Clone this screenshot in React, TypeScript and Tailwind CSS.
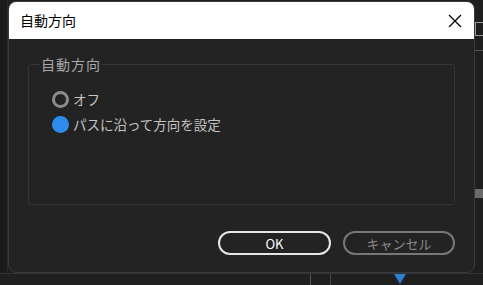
import React from 'react';

function Radio({ checked, label }: { checked: boolean; label: string }) {
  return (
    <label className="flex items-center gap-[4px] h-[25px]">
      {checked ? (
        <span className="w-[17px] h-[17px] rounded-full bg-[#2d8ceb]" />
      ) : (
        <span className="w-[17px] h-[17px] rounded-full border-[3px] border-[#8c8c8c]" />
      )}
      <span className="text-[13.5px] text-[#c4c4c4] leading-none">{label}</span>
    </label>
  );
}

export default function App() {
  return (
    <div
      className="w-[483px] h-[285px] bg-[#1e1e1e] overflow-hidden flex flex-col"
      style={{ fontFamily: '"Noto Sans CJK JP", "Noto Sans", sans-serif' }}
    >
      <div className="flex h-[273px] pt-[1px]">
        <div className="w-[8px] bg-[#1b1b1b] border-r border-[#2c2c2c]" />
        <div className="w-[467px] h-[272px] rounded-[8px] overflow-hidden border border-[#3a3a3a] bg-[#232323] flex flex-col">
          <div className="h-[37px] bg-white flex items-center justify-between pl-[11px] pr-[12px]">
            <span className="text-[14px] text-black">自動方向</span>
            <svg width="14" height="14" viewBox="0 0 14 14" className="text-black">
              <path d="M1 1 L13 13 M13 1 L1 13" stroke="currentColor" strokeWidth="1.3" />
            </svg>
          </div>
          <div className="flex-1 flex flex-col px-[19px] pt-[15px]">
            <fieldset className="h-[151px] border border-[#353535] rounded-[3px] px-[11px] pt-[4px] m-0">
              <legend className="px-[1px] text-[14px] text-[#a8a8a8] tracking-[1px]">自動方向</legend>
              <div className="flex flex-col pl-[12px] pt-[8px]">
                <Radio checked={false} label="オフ" />
                <Radio checked={true} label="パスに沿って方向を設定" />
              </div>
            </fieldset>
            <div className="flex justify-end gap-[12px] mt-[26px]">
              <button className="w-[113px] h-[24px] rounded-full border-2 border-[#e6e6e6] text-[13px] text-white leading-none">
                OK
              </button>
              <button className="w-[112px] h-[24px] rounded-full border-2 border-[#777777] text-[13px] text-[#8a8a8a] leading-none">
                キャンセル
              </button>
            </div>
          </div>
        </div>
        <div className="flex-1 flex flex-col">
          <div className="h-[21px]" />
          <div className="h-[14px] border border-[#9a9a9a] border-r-0" />
          <div className="h-[14px]" />
          <div className="h-[1px] bg-[#555555]" />
          <div className="h-[138px]" />
          <div className="h-[9px] bg-[#6a6a6a]" />
          <div className="flex-1" />
        </div>
      </div>
      <div className="flex-1 flex border-t border-[#333333] bg-[#202020]">
        <div className="w-[310px]" />
        <div className="w-[20px] border-l border-[#555555]" />
        <div className="w-[70px] border-l border-[#444444]" />
        <div className="w-[0px] h-0 border-l-[6px] border-r-[6px] border-t-[10px] border-l-transparent border-r-transparent border-t-[#2d7fd6] -ml-[6px]" />
      </div>
    </div>
  );
}
